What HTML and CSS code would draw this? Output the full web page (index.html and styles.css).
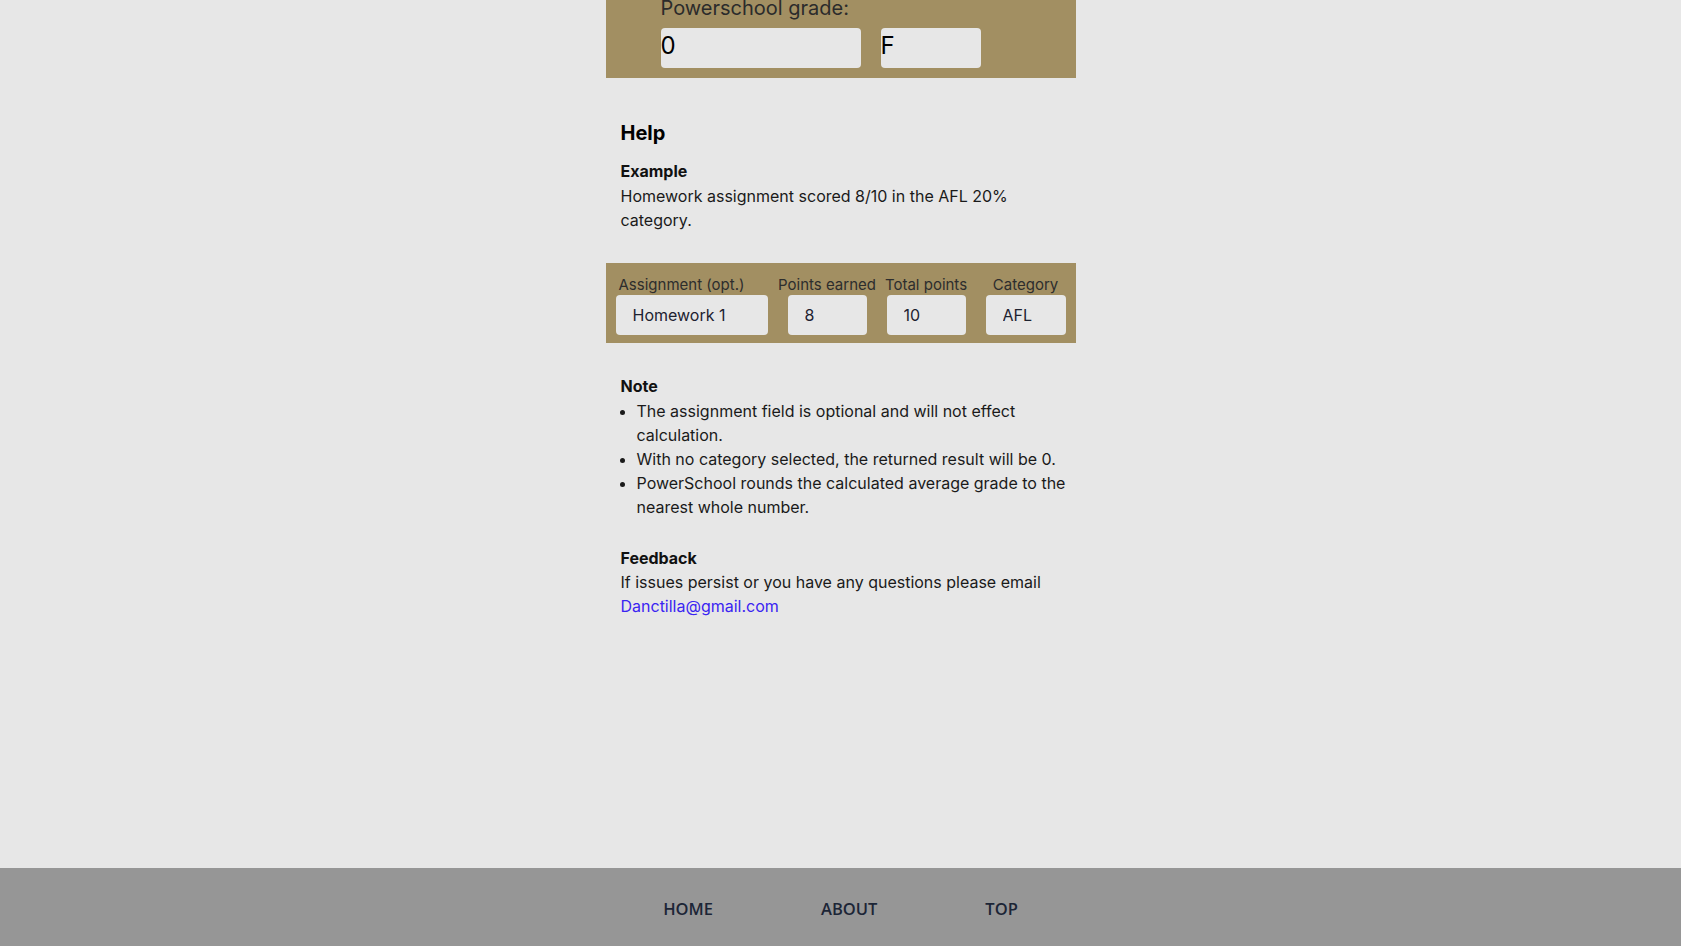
FILE: index.html
```html
<!DOCTYPE html>
<html lang="en">
<head>
<meta charset="utf-8">
<title>Grade Calculator</title>
<link rel="stylesheet" href="styles.css">
</head>
<body>
<main class="page">
  <section class="grade-panel">
    <div class="grade-label">Powerschool grade:</div>
    <div class="grade-row">
      <input class="grade-num" type="text" value="0">
      <input class="grade-letter" type="text" value="F">
    </div>
  </section>

  <section class="help">
    <h2 class="help-title">Help</h2>
    <div class="sub-title">Example</div>
    <p class="text example-text">Homework assignment scored 8/10 in the AFL 20% category.</p>
  </section>

  <section class="example-panel">
    <div class="col col-first w152">
      <span class="col-label">Assignment (opt.)</span>
      <input class="col-input" type="text" value="Homework 1">
    </div>
    <div class="col w79">
      <span class="col-label">Points earned</span>
      <input class="col-input" type="text" value="8">
    </div>
    <div class="col w79">
      <span class="col-label">Total points</span>
      <input class="col-input" type="text" value="10">
    </div>
    <div class="col w80">
      <span class="col-label">Category</span>
      <input class="col-input" type="text" value="AFL">
    </div>
  </section>

  <section class="help notes">
    <div class="sub-title">Note</div>
    <ul class="note-list">
      <li>The assignment field is optional and will not effect calculation.</li>
      <li>With no category selected, the returned result will be 0.</li>
      <li>PowerSchool rounds the calculated average grade to the nearest whole number.</li>
    </ul>
    <div class="sub-title feedback">Feedback</div>
    <p class="text">If issues persist or you have any questions please email <a class="mail" href="#">Danctilla@gmail.com</a></p>
  </section>
</main>
<footer class="footer">
  <a class="foot-link" href="#">HOME</a>
  <a class="foot-link" href="#">ABOUT</a>
  <a class="foot-link" href="#">TOP</a>
</footer>
</body>
</html>
```
FILE: styles.css
```css
* { box-sizing: border-box; }
html, body { margin: 0; padding: 0; }
body {
  background: #e7e7e7;
  font-family: Inter, "Liberation Sans", sans-serif;
  color: #111;
  height: 946px;
  display: flex;
  flex-direction: column;
  overflow: hidden;
}
.page {
  flex: 1;
  width: 470px;
  margin: 0 auto;
}
.grade-panel {
  background: #a28f62;
  padding: 0 0 10px 55px;
  height: 78px;
}
.grade-label {
  font-size: 20px;
  line-height: 16px;
  color: #2b2b2b;
}
.grade-row {
  display: flex;
  gap: 20px;
  margin-top: 12px;
}
.grade-row input {
  height: 40px;
  border: none;
  border-radius: 4px;
  background: #e7e7e7;
  font-family: Inter, sans-serif;
  font-size: 24px;
  color: #000;
  padding: 0 0 5px 0;
  outline: none;
}
.grade-num { width: 200px; }
.grade-letter { width: 100px; }

.help {
  padding-left: 15px;
}
.help-title {
  margin: 0;
  padding-top: 43px;
  font-size: 20px;
  line-height: 24px;
  font-weight: 700;
  color: #000;
}
.sub-title {
  font-size: 16px;
  line-height: 24px;
  font-weight: 700;
  color: #111;
}
.help-title + .sub-title { margin-top: 14px; }
.text {
  margin: 0;
  font-size: 16px;
  line-height: 24px;
  color: #1a1a1a;
}
.example-text { margin-top: 1px; }
.example-panel {
  margin-top: 31px;
  background: #a28f62;
  height: 80px;
  display: flex;
  gap: 20px;
  padding: 13px 10px 0 10px;
}
.col {
  display: flex;
  flex-direction: column;
  align-items: center;
  flex-shrink: 0;
}
.w152 { width: 152px; }
.w79 { width: 79px; }
.w80 { width: 80px; }
.col-first { align-items: flex-start; }
.col-first .col-label { padding-left: 3px; }
.col-label {
  font-size: 15px;
  line-height: 17px;
  color: #2d2d2d;
  white-space: nowrap;
  margin-bottom: 2px;
}
.col-input {
  width: 100%;
  height: 40px;
  border: none;
  border-radius: 4px;
  background: #e7e7e7;
  font-family: Inter, sans-serif;
  font-size: 16px;
  color: #1d2230;
  padding: 0 0 0 17px;
  outline: none;
}

.notes { padding-top: 31px; }
.note-list {
  margin: 1px 0 0 0;
  padding-left: 16px;
  font-size: 16px;
  line-height: 24px;
  color: #1a1a1a;
}
.feedback { margin-top: 27px; }
.mail {
  color: #3a24f2;
  text-decoration: none;
}
.footer {
  height: 78px;
  background: #969696;
  display: flex;
  justify-content: center;
  align-items: center;
  gap: 108px;
  padding-top: 2px;
}
.foot-link {
  font-family: "Open Sans", sans-serif;
  font-weight: 600;
  font-size: 16.5px;
  color: #1c2536;
  text-decoration: none;
}
```
